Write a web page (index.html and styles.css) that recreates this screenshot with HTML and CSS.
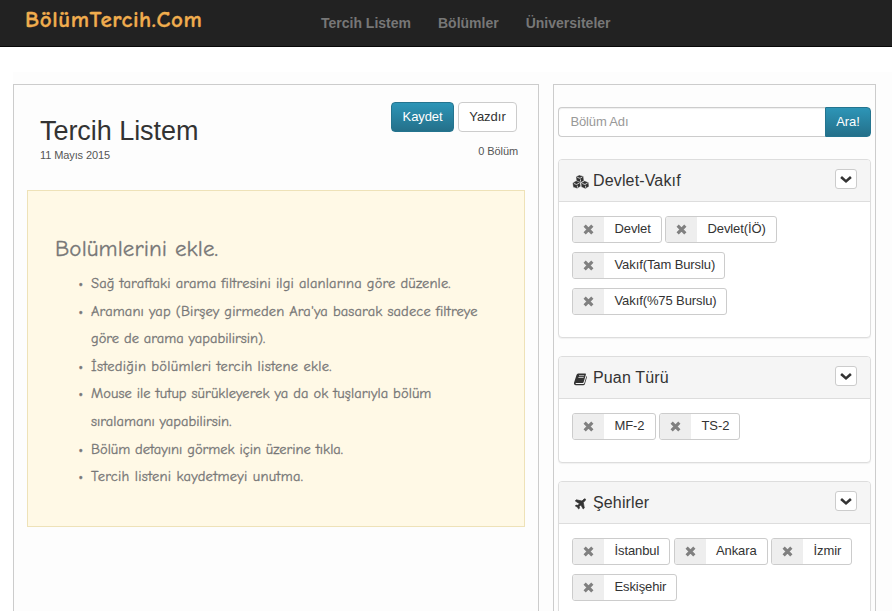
FILE: index.html
```html
<!DOCTYPE html>
<html lang="tr">
<head>
<meta charset="utf-8">
<title>BölümTercih.Com</title>
<link rel="stylesheet" href="styles.css">
</head>
<body>
<svg class="defs" width="0" height="0" aria-hidden="true">
  <symbol id="x" viewBox="0 0 10 10"><path d="M1.5 1.5 8.5 8.5M8.5 1.5 1.5 8.5" fill="none" stroke="currentColor" stroke-width="2.9"/></symbol>
  <symbol id="chevron" viewBox="0 0 11 8"><path d="M1 1.7 5.5 5.7 10 1.7" fill="none" stroke="currentColor" stroke-width="2.4"/></symbol>
</svg>
<header class="navbar">
  <a class="brand"><span>BölümTercih.Com</span></a>
  <nav class="nav"><a>Tercih Listem</a><a>Bölümler</a><a>Üniversiteler</a></nav>
</header>
<main class="content">
  <section class="list">
    <div class="list-head">
      <div><h1>Tercih Listem</h1><p class="date">11 Mayıs 2015</p></div>
      <div class="actions">
        <div class="buttons"><button class="btn primary">Kaydet</button><button class="btn">Yazdır</button></div>
        <p class="count">0 Bölüm</p>
      </div>
    </div>
    <div class="note">
      <h2>Bolümlerini ekle.</h2>
      <ul>
        <li><span class="l1">Sağ taraftaki arama filtresini ilgi alanlarına göre düzenle.</span></li>
        <li><span class="l2">Aramanı yap (Birşey girmeden Ara'ya basarak sadece filtreye</span><br><span class="l3">göre de arama yapabilirsin).</span></li>
        <li><span class="l4">İstediğin bölümleri tercih listene ekle.</span></li>
        <li><span class="l5">Mouse ile tutup sürükleyerek ya da ok tuşlarıyla bölüm</span><br><span class="l6">sıralamanı yapabilirsin.</span></li>
        <li><span class="l7">Bölüm detayını görmek için üzerine tıkla.</span></li>
        <li><span class="l8">Tercih listeni kaydetmeyi unutma.</span></li>
      </ul>
    </div>
  </section>
  <aside class="filters">
    <form class="search"><input type="text" placeholder="Bölüm Adı"><button type="button" class="btn primary">Ara!</button></form>
    <section class="panel p1">
      <div class="panel-head">
        <svg class="icon cubes" viewBox="0 0 18 14"><g fill="#333" stroke="#f5f5f5" stroke-width=".4"><path d="M7.2 0 11.4 1.3 12 5.8 8.2 7.8 4.4 6 4 1.8Z"/><path d="M4 5.8 8 7 8.8 11.3 5.2 13.6 1.2 12.2.6 8Z"/><path d="M12.6 5.8 16.6 7.4 17 11.5 13.4 13.8 9.3 12 9 8Z"/></g><path d="M5.3 2.4 8 3.3 10.4 1.9M8.5 4.4V6.6M1.9 8.5 4.7 9.5 7.5 7.8M5.4 10.7V12.7M10.3 8.5 13 9.5 15.6 8M13.6 10.7V12.7" fill="none" stroke="#f5f5f5" stroke-width=".8"/></svg>
        <h3>Devlet-Vakıf</h3><button class="toggle"><svg><use href="#chevron"/></svg></button>
      </div>
      <div class="tags">
        <span class="tag w90"><i><svg><use href="#x"/></svg></i><b>Devlet</b></span><span class="tag w112"><i><svg><use href="#x"/></svg></i><b>Devlet(İÖ)</b></span>
        <span class="tag w153"><i><svg><use href="#x"/></svg></i><b>Vakıf(Tam Burslu)</b></span>
        <span class="tag w155"><i><svg><use href="#x"/></svg></i><b>Vakıf(%75 Burslu)</b></span>
      </div>
    </section>
    <section class="panel p2">
      <div class="panel-head">
        <svg class="icon book" viewBox="0 0 18 14"><path d="M6.2 1.5H13.2Q14.2 1.5 13.9 2.6L11.6 10.2Q11.4 10.9 10.6 10.9H4.1Q3.1 10.9 3.4 11.6 3.7 12 4.4 12H11.3Q12.1 12 12.4 11.1L14.5 4Q15.2 4.4 14.9 5.2L12.9 12Q12.5 13.2 11.3 13.2H4Q1.6 13 2 10.8L4.5 3Q4.9 1.5 6.2 1.5Z" fill="#333"/><path d="M7 3.7H12.2M6.4 5.5H11.6" stroke="#ccc" stroke-width=".9"/></svg>
        <h3>Puan Türü</h3><button class="toggle"><svg><use href="#chevron"/></svg></button>
      </div>
      <div class="tags">
        <span class="tag w84"><i><svg><use href="#x"/></svg></i><b>MF-2</b></span><span class="tag w81"><i><svg><use href="#x"/></svg></i><b>TS-2</b></span>
      </div>
    </section>
    <section class="panel p3">
      <div class="panel-head">
        <svg class="icon plane" viewBox="0 0 18 14"><path d="M13.4 2Q14 2.8 12.7 4.1L11.3 5.5 12.3 11 11.2 12 8.9 7.9 7.2 9.6 7.5 11.2 6.6 12 5.4 10.1 3.3 9 4.2 8.1 5.9 8.3 7.5 6.7 3.3 4 4.3 2.8 10 4 11.4 2.6Q12.7 1.3 13.4 2Z" fill="#333" stroke="#333" stroke-width=".7"/></svg>
        <h3>Şehirler</h3><button class="toggle"><svg><use href="#chevron"/></svg></button>
      </div>
      <div class="tags cities">
        <span class="tag w98"><i><svg><use href="#x"/></svg></i><b>İstanbul</b></span><span class="tag w94"><i><svg><use href="#x"/></svg></i><b>Ankara</b></span><span class="tag w81"><i><svg><use href="#x"/></svg></i><b>İzmir</b></span>
        <span class="tag w105"><i><svg><use href="#x"/></svg></i><b>Eskişehir</b></span>
      </div>
    </section>
  </aside>
</main>
</body>
</html>
```
FILE: styles.css
```css
* { box-sizing: border-box; }
html, body { height: 100%; }
body { margin: 0; overflow: hidden; background: #fff; color: #333; font: 13px/18px "Liberation Sans", Arial, sans-serif; }
h1, h2, h3, p, ul { margin: 0; padding: 0; font-weight: normal; }
.defs { display: none; }
.navbar { display: flex; height: 47px; background: #222; border-bottom: 1px solid #080808; }
.brand { width: 321px; padding-left: 25px; color: #f0ad4e; font: 600 23px/40px "Comic Neue", "Comic Sans MS", "Open Sans", sans-serif; letter-spacing: .6px; white-space: nowrap; -webkit-text-stroke: .3px #f0ad4e; }
.nav { display: flex; gap: 27px; color: #777; font-weight: bold; font-size: 14px; line-height: 46px; }
.content { display: flex; gap: 14px; margin: 25px 0 0 13px; padding-top: 12px; background: #fdfdfd; height: 539px; overflow: hidden; }
.list, .filters { border: 1px solid #ccc; border-bottom: 0; height: 527px; overflow: hidden; }
.list { width: 526px; padding: 17px 13px 0; }
.filters { width: 323px; padding: 22px 4px 0; }
.list-head { display: flex; justify-content: space-between; height: 88px; padding: 0 7px 0 13px; }
h1 { margin-top: 13px; font-size: 27px; line-height: 32px; letter-spacing: -.05px; }
.date, .count { color: #555; font-size: 11px; line-height: 14px; letter-spacing: -.1px; }
.date { margin-top: 1px; }
.count { margin: 12px 0 0; text-align: right; }
.buttons { display: flex; gap: 4px; margin: 0 1px 0 -1px; }
.btn { height: 30px; padding: 0; border: 1px solid #ccc; border-radius: 4px; background: #fff; color: #333; font: 13px/26px "Liberation Sans", Arial, sans-serif; width: 59px; }
.primary { width: 63px; border-color: #24748f; background: linear-gradient(#2d95b7, #24708a); color: #fff; letter-spacing: -.1px; }
.note { height: 337px; padding: 43px 27px 0; border: 1px solid #eee2b8; background: #fff9e6; color: #777; font-family: "Comic Neue", "Comic Sans MS", "Open Sans", sans-serif; -webkit-text-stroke: .3px #777; }
h2 { font-size: 23px; line-height: 30px; letter-spacing: .1px; white-space: nowrap; }
.note ul { margin: 6px 0 0 36px; list-style: none; font-size: 14.5px; line-height: 27.6px; white-space: nowrap; }
.note li::before { content: "•"; display: inline-block; width: 12px; margin-left: -12px; font-family: "Liberation Sans", sans-serif; font-size: 10px; line-height: 20px; }
.l1 { letter-spacing: .15px; }
.l2 { letter-spacing: .12px; }
.l4 { letter-spacing: .28px; }
.l5 { letter-spacing: .06px; }
.l8 { letter-spacing: .26px; }
.search { display: flex; margin-bottom: 22px; }
.search input { width: 267px; height: 30px; padding: 0 12px 2px 11.5px; border: 1px solid #ccc; border-right: 0; border-radius: 4px 0 0 4px; background: #fff; box-shadow: inset 0 1px 1px #0001; font: 13px "Liberation Sans", Arial, sans-serif; letter-spacing: -.15px; }
.search input::placeholder { color: #999; opacity: 1; }
.search .btn { width: 46px; border-radius: 0 4px 4px 0; }
.panel { margin-bottom: 18px; border: 1px solid #ddd; border-radius: 4px; background: #fff; box-shadow: 0 1px 1px #0000000d; }
.p1 { height: 179px; }
.p2 { height: 107px; }
.p3 { height: 160px; }
.panel-head { display: flex; align-items: center; height: 42px; padding: 0 13px; background: #f5f5f5; border-bottom: 1px solid #ddd; border-radius: 3px 3px 0 0; }
.icon { width: 18px; height: 14px; margin: 2px 3px 0 0; }
h3 { flex: 1; font-size: 16px; line-height: 20px; letter-spacing: .15px; }
.toggle { display: flex; align-items: center; justify-content: center; width: 22px; height: 20px; margin-top: -3px; padding: 0; border: 1px solid #ccc; border-radius: 3px; background: #fff; color: #333; }
.toggle svg { width: 12px; height: 9px; }
.tags { display: flex; flex-wrap: wrap; gap: 9px 3px; padding: 14px 13px 0; }
.cities { gap: 9px 3.5px; }
.tag { display: flex; height: 27px; border: 1px solid #ccc; border-radius: 3px; background: #fff; overflow: hidden; }
.tag i { display: flex; flex: none; align-items: center; justify-content: center; width: 31px; background: #eee; color: #808080; }
.tag i svg { width: 11px; height: 11px; margin: -1px 0 0 0; }
.tag b { padding-left: 10.5px; font-weight: normal; line-height: 23px; white-space: nowrap; letter-spacing: -.1px; }
.w81 { width: 81px; } .w84 { width: 84px; } .w90 { width: 90px; } .w94 { width: 94px; } .w98 { width: 98px; }
.w105 { width: 105px; } .w112 { width: 112px; } .w153 { width: 153px; } .w155 { width: 155px; }
```
